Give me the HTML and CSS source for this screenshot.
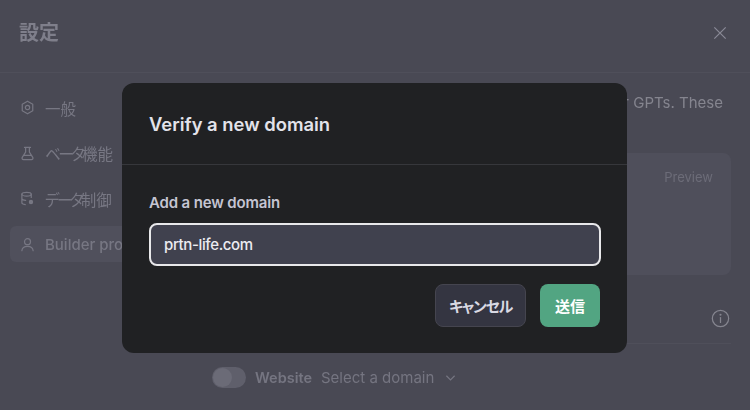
FILE: index.html
```html
<!DOCTYPE html>
<html lang="ja">
<head>
<meta charset="utf-8">
<title>設定</title>
<link rel="stylesheet" href="styles.css">
</head>
<body>
<div class="settings">
  <header class="settings-head">
    <h1 class="settings-title">設定</h1>
    <svg class="close-icon" viewBox="0 0 16 16" aria-hidden="true"><path d="M1.5 1.5l13 13M14.5 1.5l-13 13"/></svg>
  </header>
  <div class="settings-body">
    <nav class="sidebar">
      <div class="nav-item">
        <svg class="nav-icon" viewBox="0 0 16 16"><path d="M8 1.3l5.6 3.2v7L8 14.7l-5.6-3.2v-7z" stroke-linejoin="round"/><circle cx="8" cy="8" r="2.3"/></svg>
        <span>一般</span>
      </div>
      <div class="nav-item">
        <svg class="nav-icon" viewBox="0 0 16 16"><path d="M4.8 1.5h6.4M6 1.5v5L2.4 12.2c-.7 1.1.1 2.3 1.3 2.3h8.6c1.2 0 2-1.2 1.3-2.3L10 6.5v-5M4.2 10h7.6"/></svg>
        <span><span class="kana">ベータ</span>機能</span>
      </div>
      <div class="nav-item">
        <svg class="nav-icon" viewBox="0 0 16 16"><ellipse cx="7" cy="3.4" rx="5" ry="2"/><path d="M2 3.4v9.2c0 1 1.6 1.7 3.6 1.9M12 3.4v3.4M2 8c0 1 1.6 1.8 4 2"/><circle cx="11.7" cy="11.8" r="1.7" fill="currentColor"/></svg>
        <span><span class="kana">データ</span>制御</span>
      </div>
      <div class="nav-item nav-item-active">
        <svg class="nav-icon" viewBox="0 0 16 16"><circle cx="8" cy="5" r="3.2"/><path d="M2 14.6c.3-3 2.8-4.6 6-4.6s5.7 1.6 6 4.6"/></svg>
        <span>Builder profile</span>
      </div>
    </nav>
    <main class="content">
      <p class="intro">Personalize your builder profile to connect with users of your GPTs. These</p>
      <section class="preview-card"><span class="preview-label">Preview</span></section>
      <div class="info-row">
        <svg class="info-icon" viewBox="0 0 20 20"><circle cx="10" cy="10" r="8.6"/><path d="M10 9v5.2"/><circle class="info-dot" cx="10" cy="6" r="1.1"/></svg>
      </div>
      <div class="website-row">
        <span class="toggle"><span class="toggle-knob"></span></span>
        <span class="website-label">Website</span>
        <span class="website-select">Select a domain</span>
        <svg class="chevron" viewBox="0 0 12 8"><path d="M1.5 1.5L6 6l4.5-4.5"/></svg>
      </div>
    </main>
  </div>
</div>
<div class="modal" role="dialog">
  <h2 class="modal-title">Verify a new domain</h2>
  <form class="modal-body">
    <label class="field-label" for="domain">Add a new domain</label>
    <input class="field-input" id="domain" value="prtn-life.com">
    <div class="actions">
      <button class="btn btn-cancel" type="button">キャンセル</button>
      <button class="btn btn-submit" type="button">送信</button>
    </div>
  </form>
</div>
</body>
</html>
```
FILE: styles.css
```css
* { box-sizing: border-box; }
html, body { margin: 0; height: 100%; }
body {
  position: relative;
  width: 750px;
  height: 410px;
  overflow: hidden;
  background: #494954;
  font-family: Inter, "Noto Sans CJK JP", sans-serif;
  font-feature-settings: "palt";
}
.settings { display: flex; flex-direction: column; height: 100%; color: #7d7d89; filter: blur(0.4px); }
.settings-head {
  flex: none;
  height: 73px;
  padding: 0 23px 7px 19px;
  display: flex;
  align-items: center;
  justify-content: space-between;
  border-bottom: 1px solid #4f4f5a;
}
.settings-title { margin: 0; font-size: 20px; font-weight: 600; line-height: 28px; color: #7f7f8b; }
.close-icon { width: 14px; height: 14px; fill: none; stroke: #8a8a96; stroke-width: 1.4; }
.settings-body { display: flex; flex: 1; min-height: 0; }
.sidebar {
  flex: none;
  width: 212px;
  padding: 16.5px 0 0 10px;
  display: flex;
  flex-direction: column;
  gap: 9.5px;
}
.nav-item {
  height: 36px;
  padding-left: 10px;
  display: flex;
  align-items: center;
  gap: 10px;
  border-radius: 6px;
  font-size: 15.5px;
  white-space: nowrap;
  color: #777783;
}
.nav-item-active { background: #50505c; font-size: 15px; font-weight: 500; }
.kana { letter-spacing: -2.5px; }
.nav-icon {
  flex: none;
  width: 15px;
  height: 15px;
  fill: none;
  stroke: currentColor;
  stroke-width: 1.3;
  stroke-linecap: round;
}
.content { flex: 1; min-width: 0; padding: 20px 19px 0 0; }
.intro {
  margin: 0 8px 0 0;
  height: 20px;
  display: flex;
  justify-content: flex-end;
  font-size: 15px;
  line-height: 20px;
  white-space: nowrap;
  color: #85858f;
}
.preview-card {
  margin-top: 40px;
  height: 122px;
  padding: 15px 18px;
  display: flex;
  justify-content: flex-end;
  align-items: flex-start;
  border-radius: 8px;
  background: #4f4f5b;
}
.preview-label { font-size: 13px; line-height: 18px; color: #6c6c78; }
.info-row {
  height: 69px;
  padding: 34px 1px 0 0;
  display: flex;
  justify-content: flex-end;
  align-items: flex-start;
  border-bottom: 1px solid #4f4f5a;
}
.info-icon { width: 19px; height: 19px; fill: none; stroke: #85858f; stroke-width: 1.3; stroke-linecap: round; }
.info-dot { fill: #85858f; stroke: none; }
.website-row {
  margin-top: 23px;
  display: flex;
  align-items: center;
  font-size: 15px;
  line-height: 21px;
  color: #757581;
  white-space: nowrap;
}
.toggle {
  flex: none;
  width: 34px;
  height: 21px;
  padding: 1px;
  border-radius: 11px;
  background: #5f5f6b;
}
.toggle-knob { display: block; width: 19px; height: 19px; border-radius: 50%; background: #6b6b77; }
.website-label { margin-left: 9px; font-size: 14.5px; font-weight: 600; }
.website-select { margin-left: 9px; }
.chevron { margin-left: 11px; width: 11px; height: 8px; fill: none; stroke: #757581; stroke-width: 1.3; }
.modal {
  position: absolute;
  left: 122px;
  top: 83px;
  width: 505px;
  height: 270px;
  border-radius: 12px;
  background: #202123;
  color: #ececf1;
}
.modal-title {
  margin: 0;
  height: 82px;
  padding: 28px 27px 0;
  font-size: 18.4px;
  font-weight: 600;
  line-height: 26px;
  color: #e3e3ea;
  border-bottom: 1px solid #36373b;
}
.modal-body { padding: 28px 27px 0; display: flex; flex-direction: column; }
.field-label { font-size: 15px; font-weight: 600; letter-spacing: -0.15px; line-height: 20px; color: #c5c5d2; }
.field-input {
  margin-top: 10px;
  width: 452px;
  height: 43px;
  padding: 0 13px;
  border: 2px solid #e8e8ea;
  border-radius: 8px;
  background: #40414e;
  color: #ececf1;
  font: 500 15px Inter, sans-serif;
  letter-spacing: -0.38px;
  outline: none;
}
.actions { margin-top: 18px; display: flex; justify-content: flex-end; gap: 14px; }
.btn {
  height: 43px;
  border-radius: 8px;
  font: 600 15px Inter, "Noto Sans CJK JP", sans-serif;
  font-feature-settings: "palt";
}
.btn-cancel { width: 91px; border: 1px solid #45454f; background: #343541; color: #d9d9e3; letter-spacing: -1.2px; }
.btn-submit { width: 60px; border: 0; background: #52a582; color: #fff; }
```
